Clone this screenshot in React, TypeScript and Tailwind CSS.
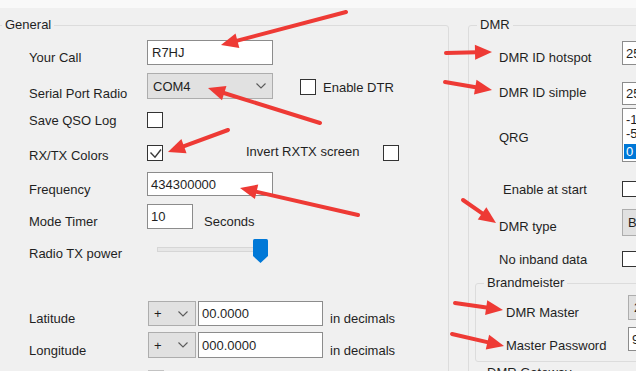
import React from "react";

type Kids = { children?: React.ReactNode };

const arrows = [
  { x1: 346, y1: 12, x2: 221, y2: 45 },
  { x1: 320, y1: 123, x2: 208, y2: 88 },
  { x1: 228, y1: 130, x2: 168, y2: 152 },
  { x1: 358, y1: 215, x2: 240, y2: 188 },
  { x1: 446, y1: 53, x2: 492, y2: 52 },
  { x1: 445, y1: 82, x2: 492, y2: 90 },
  { x1: 463, y1: 200, x2: 496, y2: 223 },
  { x1: 455, y1: 303, x2: 503, y2: 310 },
  { x1: 452, y1: 334, x2: 504, y2: 346 },
];

function Arrow({ x1, y1, x2, y2 }: { x1: number; y1: number; x2: number; y2: number }) {
  const len = Math.hypot(x2 - x1, y2 - y1);
  const ux = (x2 - x1) / len;
  const uy = (y2 - y1) / len;
  const hl = 17;
  const hw = 7.5;
  const bx = x2 - ux * hl;
  const by = y2 - uy * hl;
  const pts = `${x2},${y2} ${bx - uy * hw},${by + ux * hw} ${bx + uy * hw},${by - ux * hw}`;
  return (
    <g>
      <line x1={x1} y1={y1} x2={bx + ux * 2} y2={by + uy * 2} stroke="#ee3a35" strokeWidth={4} strokeLinecap="round" />
      <polygon points={pts} fill="#ee3a35" />
    </g>
  );
}

function Check({ checked = false, className = "" }: { checked?: boolean; className?: string }) {
  return (
    <div className={"flex h-[16px] w-[16px] shrink-0 border border-[#333333] bg-white " + className}>
      {checked && (
        <svg width="14" height="14" viewBox="0 0 14 14">
          <path d="M2.5 6.5 L7 11.2 L13 3.5" fill="none" stroke="#3a3a3a" strokeWidth="1.4" />
        </svg>
      )}
    </div>
  );
}

function TextBox({ value, className }: { value: string; className: string }) {
  return (
    <div className={"flex shrink-0 items-center overflow-hidden whitespace-nowrap border border-[#8c8c8c] bg-white pl-[3px] leading-[15px] " + className}>
      {value}
    </div>
  );
}

function Combo({ value, className }: { value: string; className: string }) {
  return (
    <div className={"flex shrink-0 items-center whitespace-nowrap border border-[#adadad] bg-[#e1e1e1] pl-[5px] pr-[6px] leading-[15px] " + className}>
      <span className="flex-1">{value}</span>
      <svg width="10" height="6" viewBox="0 0 10 6">
        <path d="M0.5 0.5 L5 5 L9.5 0.5" fill="none" stroke="#5a5a5a" strokeWidth="1.1" />
      </svg>
    </div>
  );
}

function Row({ h, lw, lt, label, children }: { h: string; lw: string; lt: string; label: string } & Kids) {
  return (
    <div className={"flex shrink-0 items-start " + h}>
      <div className={"shrink-0 whitespace-nowrap leading-[15px] " + lw + " " + lt}>{label}</div>
      {children}
    </div>
  );
}

function Slider() {
  return (
    <div className="ml-[10px] flex items-start">
      <div className="mt-[8px] h-[5px] w-[97px] border border-[#d6d6d6] bg-[#e7e7e7]" />
      <svg width="15" height="24" viewBox="0 0 15 24" className="-ml-[1px]">
        <path d="M1.5 0 H13.5 Q15 0 15 1.5 V17 L7.5 24 L0 17 V1.5 Q0 0 1.5 0 Z" fill="#0078d7" />
      </svg>
    </div>
  );
}

export default function App() {
  return (
    <div className="relative h-[371px] w-[636px] overflow-hidden bg-[#f0f0f0] font-['Liberation_Sans',Arial,sans-serif] text-[13px] text-[#1f1f1f]">
      <div className="h-[8px] bg-[#f9f9f9]" />
      <div className="flex items-start">
        {/* General */}
        <fieldset className="-ml-[3px] mt-[9px] h-[400px] w-[452px] shrink-0 rounded-[3px] border border-[#dcdcdc]">
          <legend className="ml-[4px] px-[3px] leading-[16px]">General</legend>
          <div className="flex flex-col pl-[31px] pt-[7px]">
            <Row h="h-[33px]" lw="w-[118px]" lt="mt-[10px]" label="Your Call">
              <TextBox value="R7HJ" className="h-[25px] w-[126px] pl-[4px]" />
            </Row>
            <Row h="h-[39px]" lw="w-[118px]" lt="mt-[13px]" label="Serial Port Radio">
              <Combo value="COM4" className="h-[26px] w-[126px]" />
              <div className="ml-[27px] mt-[6px] flex items-center gap-[7px]">
                <Check />
                <span className="leading-[15px]">Enable DTR</span>
              </div>
            </Row>
            <Row h="h-[33px]" lw="w-[118px]" lt="mt-[1px]" label="Save QSO Log">
              <Check />
            </Row>
            <Row h="h-[27px]" lw="w-[118px]" lt="mt-[3px]" label="RX/TX Colors">
              <Check checked />
              <div className="-mt-[1px] ml-[83px] w-[137px] leading-[15px]">Invert RXTX screen</div>
              <Check />
            </Row>
            <Row h="h-[32px]" lw="w-[118px]" lt="mt-[10px]" label="Frequency">
              <TextBox value="434300000" className="h-[24px] w-[126px]" />
            </Row>
            <Row h="h-[35px]" lw="w-[118px]" lt="mt-[10px]" label="Mode Timer">
              <TextBox value="10" className="h-[25px] w-[46px]" />
              <span className="ml-[11px] mt-[10px] leading-[15px]">Seconds</span>
            </Row>
            <Row h="h-[62px]" lw="w-[118px]" lt="mt-[7px]" label="Radio TX power">
              <Slider />
            </Row>
            <Row h="h-[31px]" lw="w-[118px]" lt="mt-[10px]" label="Latitude">
              <Combo value="+" className="ml-[1px] h-[25px] w-[48px] pr-[7px]" />
              <TextBox value="00.0000" className="ml-[2px] h-[25px] w-[125px]" />
              <span className="ml-[7px] mt-[10px] leading-[15px]">in decimals</span>
            </Row>
            <Row h="h-[37px]" lw="w-[118px]" lt="mt-[11px]" label="Longitude">
              <Combo value="+" className="ml-[1px] h-[26px] w-[48px] border-[#9a9a9a] pr-[7px]" />
              <TextBox value="000.0000" className="ml-[2px] h-[26px] w-[125px]" />
              <span className="ml-[7px] mt-[11px] leading-[15px]">in decimals</span>
            </Row>
            <Row h="h-[20px]" lw="w-[118px]" lt="" label="">
              <div className="ml-[1px] mt-[1px] h-[16px] w-[16px] border border-[#c3c3c3] bg-[#e6e6e6]" />
            </Row>
          </div>
        </fieldset>

        {/* DMR */}
        <fieldset className="ml-[19px] mt-[9px] h-[400px] w-[220px] shrink-0 rounded-[3px] border border-[#dcdcdc]">
          <legend className="ml-[8px] px-[3px] leading-[16px]">DMR</legend>
          <div className="flex flex-col pl-[30px] pt-[8px]">
            <Row h="h-[41px]" lw="w-[123px]" lt="mt-[9px]" label="DMR ID hotspot">
              <TextBox value="2500000" className="h-[24px] w-[70px]" />
            </Row>
            <Row h="h-[26px]" lw="w-[123px]" lt="mt-[3px]" label="DMR ID simple">
              <TextBox value="2500000" className="h-[23px] w-[70px]" />
            </Row>
            <Row h="h-[73px]" lw="w-[123px]" lt="mt-[22px]" label="QRG">
              <div className="flex h-[54px] w-[70px] shrink-0 flex-col border border-[#8c8c8c] bg-white px-[1px] pt-[4px] leading-[14px]">
                <div className="h-[14px] pl-[2px]">-100</div>
                <div className="h-[14px] pl-[2px]">-50</div>
                <div className="mt-[3px] h-[15px] bg-[#0078d7] pl-[2px] leading-[15px] text-white">0</div>
              </div>
            </Row>
            <Row h="h-[28px]" lw="w-[123px]" lt="mt-[1px] pl-[4px]" label="Enable at start">
              <Check />
            </Row>
            <Row h="h-[42px]" lw="w-[123px]" lt="mt-[10px]" label="DMR type">
              <Combo value="BrandMeister" className="h-[27px] w-[90px]" />
            </Row>
            <Row h="h-[17px]" lw="w-[123px]" lt="mt-[1px]" label="No inband data">
              <Check />
            </Row>
          </div>
          <fieldset className="ml-[6px] mt-[7px] w-[200px] shrink-0 rounded-[3px] border border-[#dcdcdc]">
            <legend className="ml-[8px] px-[3px] leading-[16px]">Brandmeister</legend>
            <div className="flex flex-col pl-[30px] pt-[4px]">
              <Row h="h-[32px]" lw="w-[122px]" lt="mt-[10px]" label="DMR Master">
                <Combo value="2501 Russia" className="h-[25px] w-[90px]" />
              </Row>
              <Row h="h-[34px]" lw="w-[122px]" lt="mt-[11px]" label="Master Password">
                <TextBox value="9999" className="h-[24px] w-[70px]" />
              </Row>
            </div>
          </fieldset>
          <fieldset className="ml-[6px] mt-[3px] h-[40px] w-[200px] rounded-[3px] border border-[#dcdcdc]">
            <legend className="ml-[8px] px-[3px] leading-[16px]">DMR Gateway</legend>
          </fieldset>
        </fieldset>
      </div>

      <svg className="pointer-events-none absolute inset-0" width="636" height="371" viewBox="0 0 636 371">
        {arrows.map((a, i) => (
          <Arrow key={i} {...a} />
        ))}
      </svg>
    </div>
  );
}
